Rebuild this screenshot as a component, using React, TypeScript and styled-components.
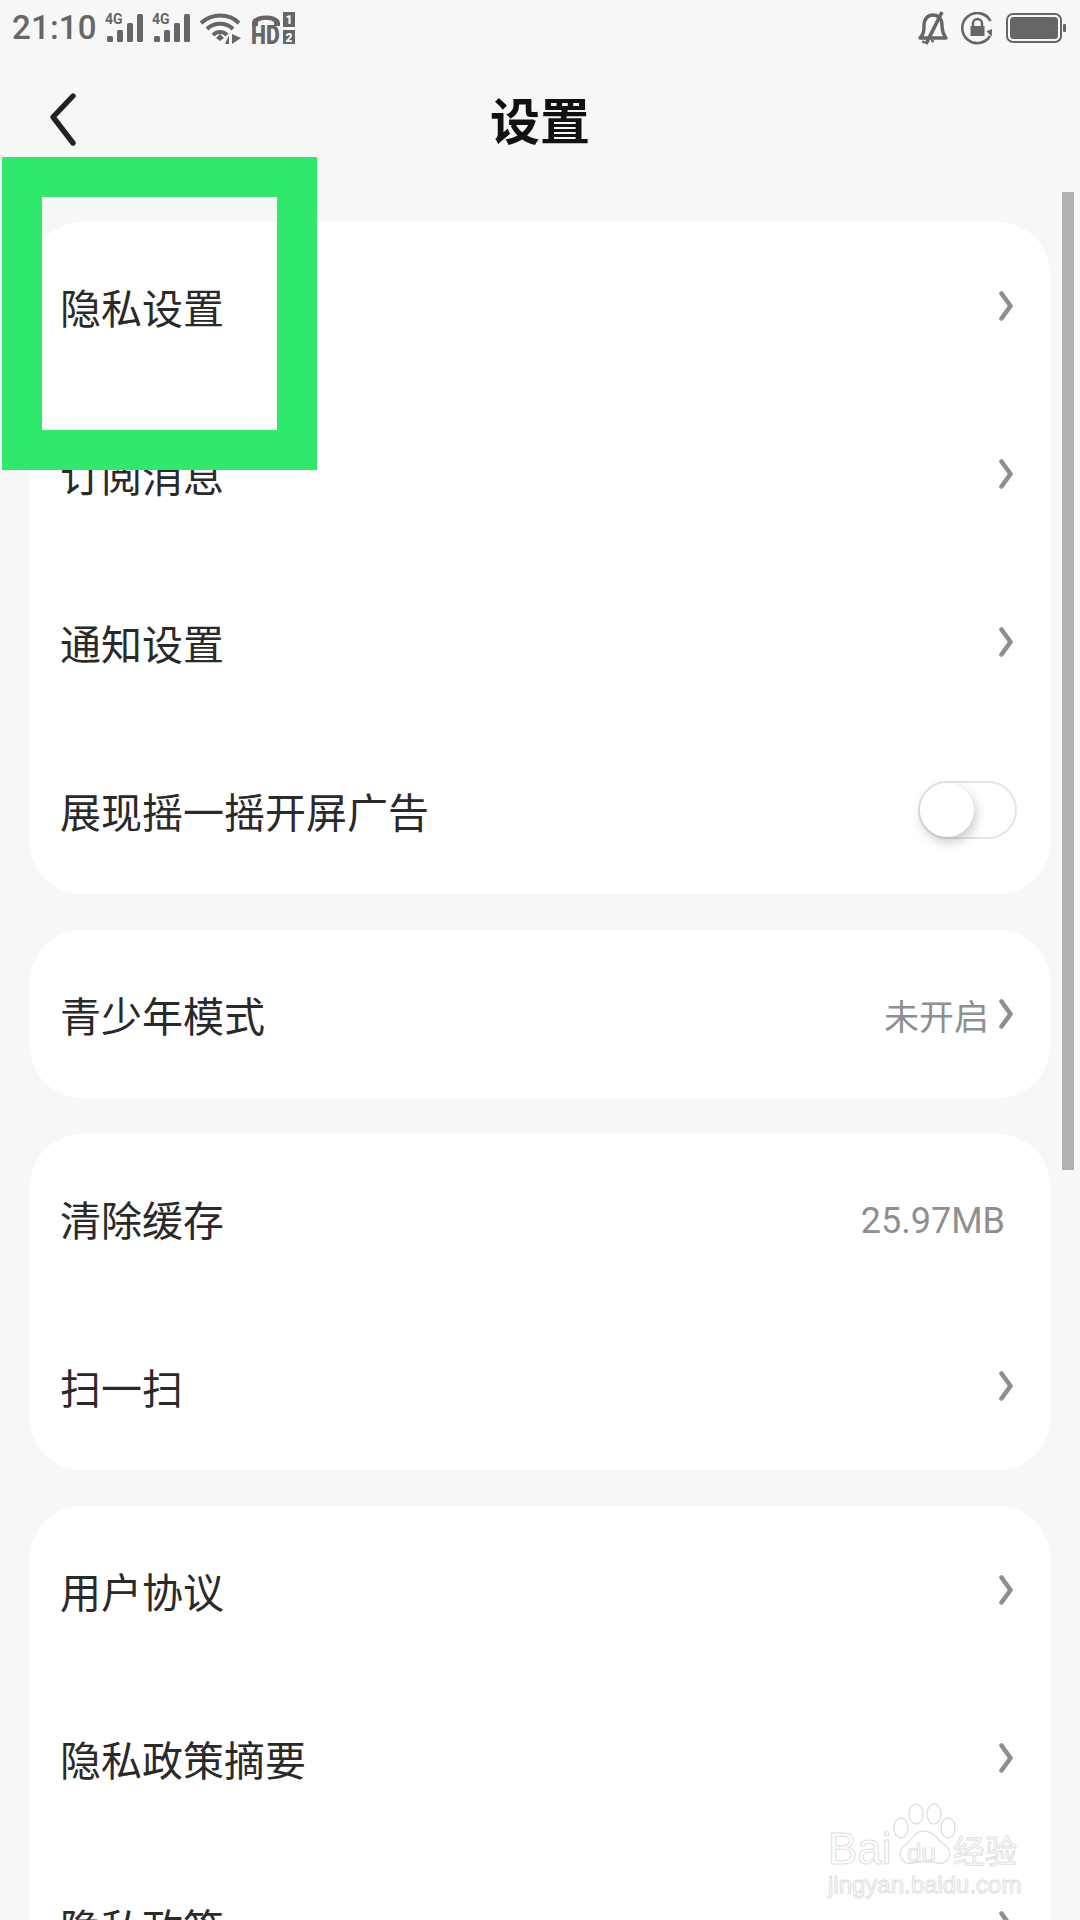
import React from "react";
import styled, { createGlobalStyle } from "styled-components";

const Global = createGlobalStyle`
  html, body { margin: 0; padding: 0; background: #f7f7f7; }
  body { width: 1080px; height: 1920px; overflow: hidden; font-family: "Noto Sans CJK SC", "Noto Sans", sans-serif; }
`;

const Page = styled.div`
  position: relative;
  width: 1080px;
  height: 1920px;
  overflow: hidden;
  background: #f7f7f7;
  display: flex;
  flex-direction: column;
`;

const StatusBar = styled.div`
  height: 56px;
  padding: 0 14px 0 12px;
  display: flex;
  align-items: center;
  justify-content: space-between;
  color: #666;
  flex: none;
`;

const StatusGroup = styled.div<{ $gap: number }>`
  display: flex;
  align-items: center;
  gap: ${(p) => p.$gap}px;
`;

const Clock = styled.span`
  font: 500 33px/56px Roboto, sans-serif;
  letter-spacing: 0.2px;
`;

const Header = styled.header`
  position: relative;
  height: 132px;
  flex: none;
  display: flex;
  align-items: center;
  justify-content: center;
`;

const BackButton = styled.div`
  position: absolute;
  left: 47px;
  top: 36px;
  line-height: 0;
`;

const Title = styled.h1`
  margin: 0;
  font: 700 50px/1 "Noto Sans CJK SC", sans-serif;
  color: #111;
  position: relative;
  top: -4px;
`;

const List = styled.main`
  padding: 34px 30px 0;
  display: flex;
  flex-direction: column;
  gap: 36px;
`;

const Card = styled.section`
  background: #fff;
  border-radius: 52px;
  overflow: hidden;
`;

const Row = styled.div`
  height: 168px;
  padding: 0 37px 0 30px;
  display: flex;
  align-items: center;
  justify-content: space-between;
`;

const Label = styled.span`
  font: 400 41px/48px "Noto Sans CJK SC", sans-serif;
  color: #2a2a2a;
`;

const Trailing = styled.div`
  display: flex;
  align-items: center;
  gap: 10px;
`;

const Value = styled.span`
  font: 400 35px/40px "Noto Sans CJK SC", sans-serif;
  color: #8f8f8f;
  position: relative;
  top: 1px;
`;

const Size = styled.span`
  font: 400 36px/40px Roboto, sans-serif;
  color: #8f8f8f;
  margin-right: 8px;
  position: relative;
  top: 3px;
`;

const Toggle = styled.div`
  position: relative;
  width: 99px;
  height: 58px;
  box-sizing: border-box;
  border: 2px solid #e5e5e5;
  border-radius: 29px;
  margin-right: -4px;
  background: #fff;
`;

const Knob = styled.div`
  position: absolute;
  left: 0;
  top: 0;
  width: 54px;
  height: 54px;
  border-radius: 50%;
  background: #fff;
  box-shadow: 2px 5px 12px rgba(0, 0, 0, 0.22);
`;

const Highlight = styled.div`
  position: absolute;
  left: 2px;
  top: 157px;
  width: 315px;
  height: 313px;
  box-sizing: border-box;
  border: 40px solid #30e86c;
`;

const ScrollThumb = styled.div`
  position: absolute;
  left: 1062px;
  top: 192px;
  width: 12px;
  height: 978px;
  background: #b0b0b0;
`;

const Watermark = styled.div`
  position: absolute;
  left: 828px;
  top: 1803px;
  width: 200px;
  height: 96px;
  color: transparent;
  -webkit-text-stroke: 1px #e0e0e0;
`;

const MarkLine = styled.span<{ $x: number; $y: number; $size: number; $font: string }>`
  position: absolute;
  left: ${(p) => p.$x}px;
  top: ${(p) => p.$y}px;
  font-family: ${(p) => p.$font};
  font-size: ${(p) => p.$size}px;
  line-height: 1;
  font-weight: 400;
  white-space: nowrap;
`;

const Chevron = () => (
  <svg width="14" height="30" viewBox="0 0 14 30" fill="none">
    <path d="M2.5 2.5 L11.5 15 L2.5 27.5" stroke="#8f8f8f" strokeWidth="4.6" strokeLinecap="round" strokeLinejoin="round" />
  </svg>
);

const SignalIcon = () => (
  <svg width="39" height="30" viewBox="0 0 39 30" fill="#666" overflow="visible">
    <text x="0" y="11" fontFamily="Roboto, sans-serif" fontWeight="700" fontSize="14">4G</text>
    <rect x="2" y="23" width="6" height="6" rx="1.5" />
    <rect x="12" y="17" width="6" height="12" rx="1.5" />
    <rect x="22" y="10" width="6" height="19" rx="1.5" />
    <rect x="32" y="1" width="6" height="28" rx="1.5" />
  </svg>
);

const WifiIcon = () => (
  <svg width="44" height="33" viewBox="0 0 44 33" fill="none">
    <path d="M2 11 C13 1 30 1 40 11" stroke="#666" strokeWidth="4" />
    <path d="M8 17 C15 10 27 10 34 17" stroke="#666" strokeWidth="4" />
    <path d="M14 23 C18 19 24 19 28 23" stroke="#666" strokeWidth="4" />
    <path d="M17 26 L21 22 L25 26 L21 29 Z" fill="#666" />
    <path d="M30 32 L30 23 L26 32 Z M33 22 L33 32 L42 26 Z" fill="#666" />
  </svg>
);

const HdIcon = () => (
  <svg width="44" height="33" viewBox="0 0 44 33" fill="#666" overflow="visible">
    <path d="M1 11 C1 1 29 1 29 11 L29 14 L23 14 L23 10 C19 7 11 7 7 10 L7 14 L1 14 Z" />
    <text transform="translate(0 32) scale(0.85 1)" fontFamily="Roboto, sans-serif" fontWeight="900" fontSize="25">HD</text>
    <rect x="32" y="0" width="12" height="15" />
    <rect x="32" y="18" width="12" height="14" />
    <text x="38" y="12" textAnchor="middle" fontFamily="Roboto, sans-serif" fontWeight="900" fontSize="12" fill="#f7f7f7">1</text>
    <text x="38" y="29.5" textAnchor="middle" fontFamily="Roboto, sans-serif" fontWeight="900" fontSize="12" fill="#f7f7f7">2</text>
  </svg>
);

const BellIcon = () => (
  <svg width="32" height="34" viewBox="0 0 32 34" fill="none" stroke="#666" strokeWidth="3.4">
    <path d="M3 27 C7 23 7 19 7 14 C7 8 11 4 16 4 C21 4 25 8 25 14 C25 19 26 23 29 27 Z" strokeLinejoin="round" />
    <path d="M9 33 L25 1" strokeWidth="3.6" />
    <path d="M6 32 L7 30 M15 31 L16 29" strokeWidth="3" />
  </svg>
);

const RotateLockIcon = () => (
  <svg width="33" height="33" viewBox="0 0 33 33" fill="none">
    <path d="M29 24 A15 15 0 1 1 29.5 9" stroke="#666" strokeWidth="2.6" />
    <path d="M26 18 L32 18 L29 25 Z" fill="#666" transform="rotate(-20 29 20)" />
    <rect x="9.5" y="14" width="14" height="10" fill="#666" />
    <path d="M12 14 L12 11.5 A4.5 4.5 0 0 1 21 11.5 L21 14" stroke="#666" strokeWidth="2.4" />
  </svg>
);

const BatteryIcon = () => (
  <svg width="60" height="30" viewBox="0 0 60 30" fill="none">
    <rect x="1" y="1" width="54" height="28" rx="6" stroke="#666" strokeWidth="2" />
    <rect x="4" y="4" width="48" height="22" rx="3.5" fill="#666" />
    <rect x="57" y="11" width="3" height="8" rx="1" fill="#666" />
  </svg>
);

const BackIcon = () => (
  <svg width="32" height="56" viewBox="0 0 32 56" fill="none">
    <path d="M26 5 L6 26 L26 52" transform="translate(0 -1)" stroke="#222" strokeWidth="5.4" strokeLinecap="round" strokeLinejoin="round" />
  </svg>
);

const PawIcon = () => (
  <svg width="66" height="76" viewBox="0 0 66 76" fill="#fff" stroke="#e0e0e0" strokeWidth="1.4" style={{ position: "absolute", left: 64, top: 0 }}>
    <ellipse cx="9" cy="25" rx="7" ry="10" />
    <ellipse cx="24" cy="11" rx="7" ry="10" />
    <ellipse cx="42" cy="11" rx="7" ry="10" />
    <ellipse cx="56" cy="25" rx="7" ry="10" />
    <path d="M32 28 C42 28 46 38 54 43 C62 50 56 62 46 60 C38 58 28 58 20 60 C10 62 4 50 12 43 C20 38 22 28 32 28 Z" />
  </svg>
);

type Item = { label: string; kind?: "chevron" | "toggle" | "size" | "value"; text?: string };

const groups: Item[][] = [
  [
    { label: "隐私设置" },
    { label: "订阅消息" },
    { label: "通知设置" },
    { label: "展现摇一摇开屏广告", kind: "toggle" },
  ],
  [{ label: "青少年模式", kind: "value", text: "未开启" }],
  [{ label: "清除缓存", kind: "size", text: "25.97MB" }, { label: "扫一扫" }],
  [{ label: "用户协议" }, { label: "隐私政策摘要" }, { label: "隐私政策" }],
];

function renderTrailing(item: Item) {
  if (item.kind === "toggle")
    return (
      <Toggle>
        <Knob />
      </Toggle>
    );
  if (item.kind === "size") return <Size>{item.text}</Size>;
  return (
    <Trailing>
      {item.kind === "value" && <Value>{item.text}</Value>}
      <Chevron />
    </Trailing>
  );
}

export default function App() {
  return (
    <Page>
      <Global />
      <StatusBar>
        <StatusGroup $gap={8}>
          <Clock>21:10</Clock>
          <SignalIcon />
          <SignalIcon />
          <WifiIcon />
          <HdIcon />
        </StatusGroup>
        <StatusGroup $gap={12}>
          <BellIcon />
          <RotateLockIcon />
          <BatteryIcon />
        </StatusGroup>
      </StatusBar>
      <Header>
        <BackButton>
          <BackIcon />
        </BackButton>
        <Title>设置</Title>
      </Header>
      <List>
        {groups.map((g, i) => (
          <Card key={i}>
            {g.map((item) => (
              <Row key={item.label}>
                <Label>{item.label}</Label>
                {renderTrailing(item)}
              </Row>
            ))}
          </Card>
        ))}
      </List>
      <ScrollThumb />
      <Highlight />
      <Watermark>
        <PawIcon />
        <MarkLine $x={0} $y={24} $size={44} $font="'Liberation Sans', sans-serif">Bai</MarkLine>
        <MarkLine $x={79} $y={37} $size={26} $font="'Liberation Sans', sans-serif">du</MarkLine>
        <MarkLine $x={125} $y={30} $size={32} $font="'Noto Sans CJK SC', sans-serif">经验</MarkLine>
        <MarkLine $x={0} $y={70} $size={24} $font="'Liberation Sans', sans-serif">jingyan.baidu.com</MarkLine>
      </Watermark>
    </Page>
  );
}
